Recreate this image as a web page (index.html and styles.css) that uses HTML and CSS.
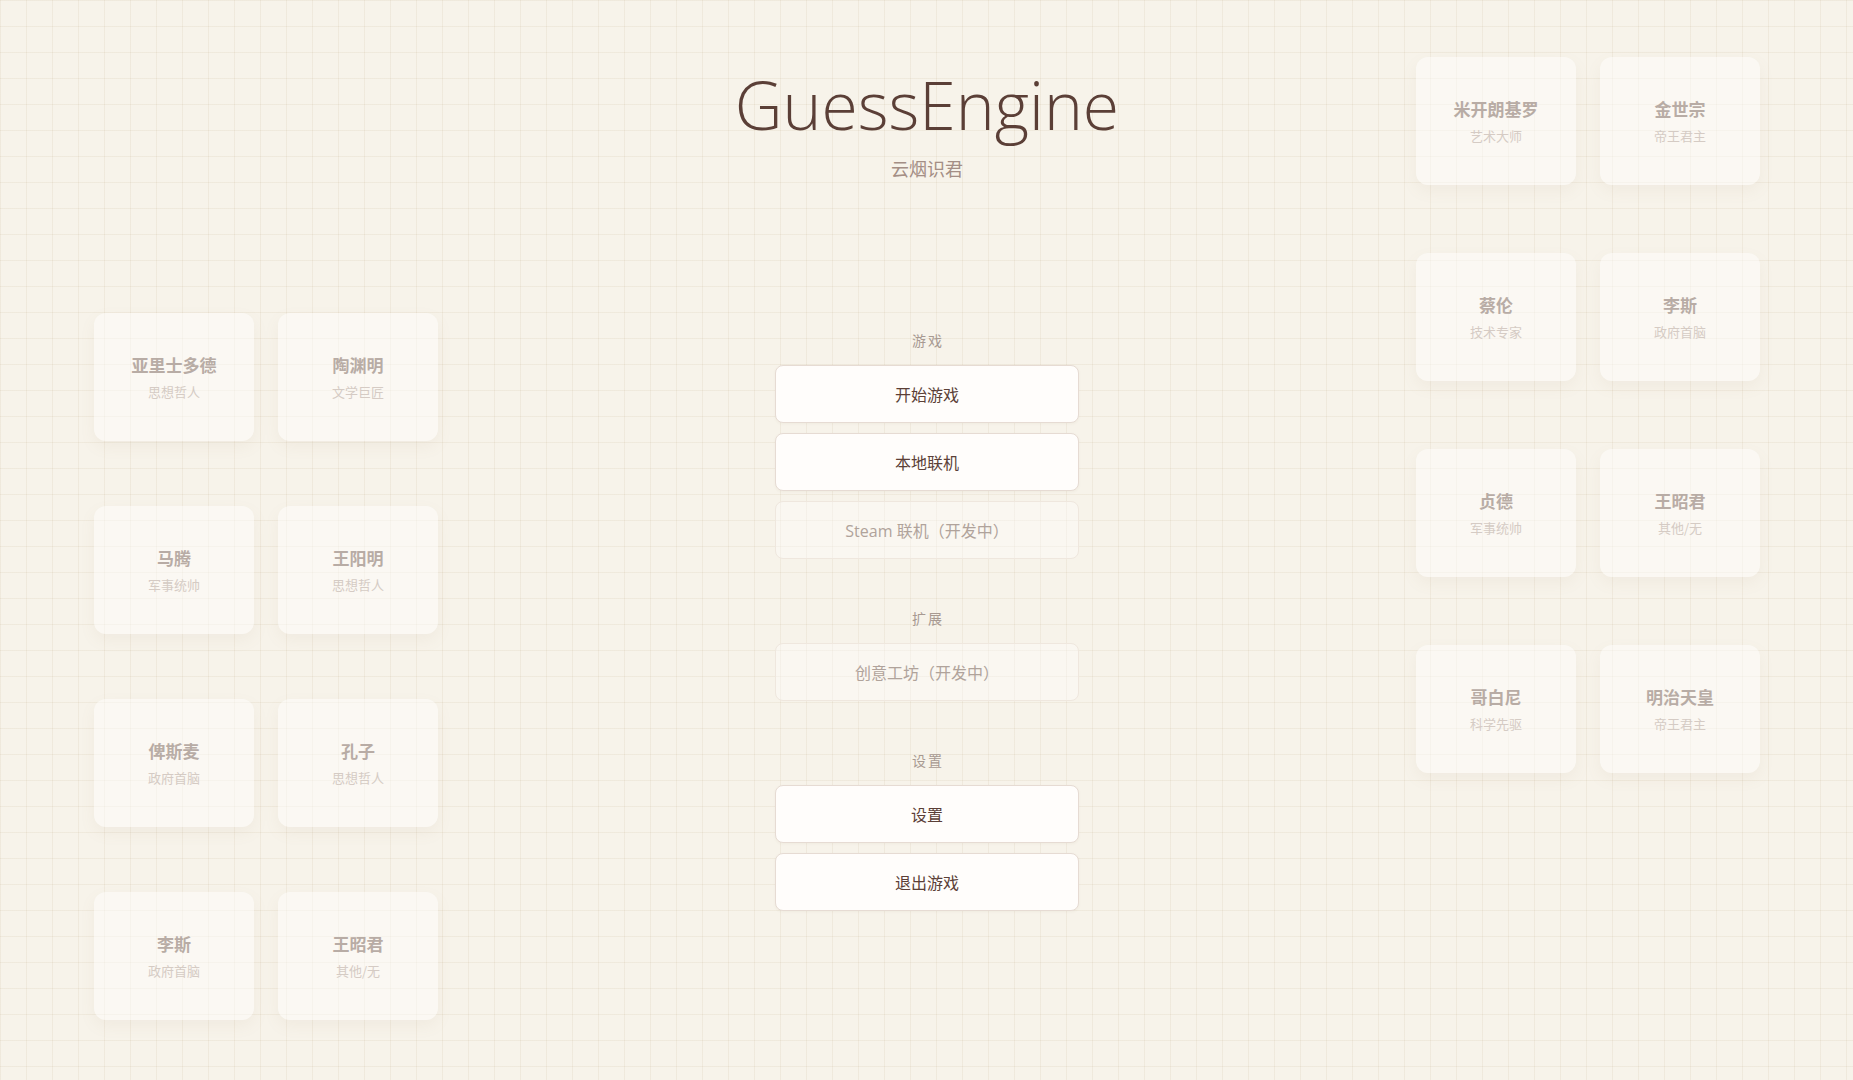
FILE: index.html
```html
<!DOCTYPE html>
<html lang="zh-CN">
<head>
<meta charset="utf-8">
<title>GuessEngine</title>
<link rel="stylesheet" href="styles.css">
</head>
<body>
<div class="page">
  <div class="cluster cluster-left">
    <div class="card"><div class="card-name">亚里士多德</div><div class="card-sub">思想哲人</div></div>
    <div class="card"><div class="card-name">陶渊明</div><div class="card-sub">文学巨匠</div></div>
    <div class="card"><div class="card-name">马腾</div><div class="card-sub">军事统帅</div></div>
    <div class="card"><div class="card-name">王阳明</div><div class="card-sub">思想哲人</div></div>
    <div class="card"><div class="card-name">俾斯麦</div><div class="card-sub">政府首脑</div></div>
    <div class="card"><div class="card-name">孔子</div><div class="card-sub">思想哲人</div></div>
    <div class="card"><div class="card-name">李斯</div><div class="card-sub">政府首脑</div></div>
    <div class="card"><div class="card-name">王昭君</div><div class="card-sub">其他/无</div></div>
  </div>

  <main class="center">
    <header class="brand">
      <h1 class="title">GuessEngine</h1>
      <div class="subtitle">云烟识君</div>
    </header>
    <nav class="menu">
      <section class="group">
        <div class="group-label">游戏</div>
        <button class="btn">开始游戏</button>
        <button class="btn">本地联机</button>
        <button class="btn btn-disabled">Steam 联机（开发中）</button>
      </section>
      <section class="group">
        <div class="group-label">扩展</div>
        <button class="btn btn-disabled">创意工坊（开发中）</button>
      </section>
      <section class="group">
        <div class="group-label">设置</div>
        <button class="btn">设置</button>
        <button class="btn">退出游戏</button>
      </section>
    </nav>
  </main>

  <div class="cluster cluster-right">
    <div class="card"><div class="card-name">米开朗基罗</div><div class="card-sub">艺术大师</div></div>
    <div class="card"><div class="card-name">金世宗</div><div class="card-sub">帝王君主</div></div>
    <div class="card"><div class="card-name">蔡伦</div><div class="card-sub">技术专家</div></div>
    <div class="card"><div class="card-name">李斯</div><div class="card-sub">政府首脑</div></div>
    <div class="card"><div class="card-name">贞德</div><div class="card-sub">军事统帅</div></div>
    <div class="card"><div class="card-name">王昭君</div><div class="card-sub">其他/无</div></div>
    <div class="card"><div class="card-name">哥白尼</div><div class="card-sub">科学先驱</div></div>
    <div class="card"><div class="card-name">明治天皇</div><div class="card-sub">帝王君主</div></div>
  </div>
</div>
</body>
</html>
```

FILE: styles.css
```css
html, body {
  margin: 0;
  padding: 0;
}

body {
  width: 1853px;
  height: 1080px;
  overflow: hidden;
  background-color: #f7f3ea;
  background-image:
    linear-gradient(to right, rgba(190, 165, 130, 0.13) 1px, transparent 1px),
    linear-gradient(to bottom, rgba(190, 165, 130, 0.13) 1px, transparent 1px);
  background-size: 26px 26px;
  font-family: "Open Sans", "Noto Sans CJK SC", sans-serif;
}

.page {
  display: flex;
  justify-content: space-between;
  align-items: flex-start;
  padding: 0 93px 0 94px;
  height: 1080px;
  box-sizing: border-box;
}

.cluster {
  display: grid;
  grid-template-columns: 160px 160px;
  column-gap: 24px;
}

.cluster-left {
  padding-top: 313px;
  row-gap: 65px;
}

.cluster-right {
  padding-top: 57px;
  row-gap: 68px;
}

.card {
  width: 160px;
  height: 128px;
  box-sizing: border-box;
  border-radius: 12px;
  background: rgba(255, 255, 255, 0.45);
  box-shadow: 0 6px 16px rgba(160, 130, 100, 0.07);
  display: flex;
  flex-direction: column;
  align-items: center;
  justify-content: center;
  gap: 6px;
}

.card-name {
  font-family: "Noto Sans CJK SC", sans-serif;
  font-size: 17px;
  line-height: 24px;
  font-weight: 700;
  color: #b8aca5;
}

.card-sub {
  font-family: "Noto Sans CJK SC", sans-serif;
  font-size: 13px;
  line-height: 18px;
  color: #d5cbc4;
}

.center {
  width: 304px;
  display: flex;
  flex-direction: column;
  align-items: center;
}

.brand {
  display: flex;
  flex-direction: column;
  align-items: center;
  padding-top: 71px;
}

.title {
  margin: 0;
  font-family: "Open Sans", sans-serif;
  font-weight: 300;
  font-size: 66px;
  line-height: 66px;
  color: #5b3f37;
  white-space: nowrap;
}

.subtitle {
  margin-top: 19px;
  font-family: "Noto Sans CJK SC", sans-serif;
  font-size: 18px;
  line-height: 24px;
  color: #a48e85;
}

.menu {
  width: 100%;
  padding-top: 150px;
  display: flex;
  flex-direction: column;
  gap: 49px;
}

.group {
  display: flex;
  flex-direction: column;
  gap: 10px;
}

.group-label {
  font-family: "Noto Sans CJK SC", sans-serif;
  font-size: 14px;
  line-height: 20px;
  letter-spacing: 2px;
  padding-left: 2px;
  text-align: center;
  color: #a89a92;
  margin-bottom: 5px;
}

.btn {
  display: block;
  width: 304px;
  height: 58px;
  margin: 0;
  padding: 0;
  box-sizing: border-box;
  border: 1px solid #e6dbd3;
  border-radius: 8px;
  background: #fffdfb;
  box-shadow: 0 1px 3px rgba(120, 90, 60, 0.05);
  font-family: "Open Sans", "Noto Sans CJK SC", sans-serif;
  font-size: 16px;
  font-weight: 400;
  color: #5b3f37;
  cursor: pointer;
}

.btn-disabled {
  background: rgba(255, 255, 255, 0.35);
  border-color: #efe7de;
  box-shadow: none;
  color: #b0a39b;
  font-weight: 400;
  cursor: default;
}
```
